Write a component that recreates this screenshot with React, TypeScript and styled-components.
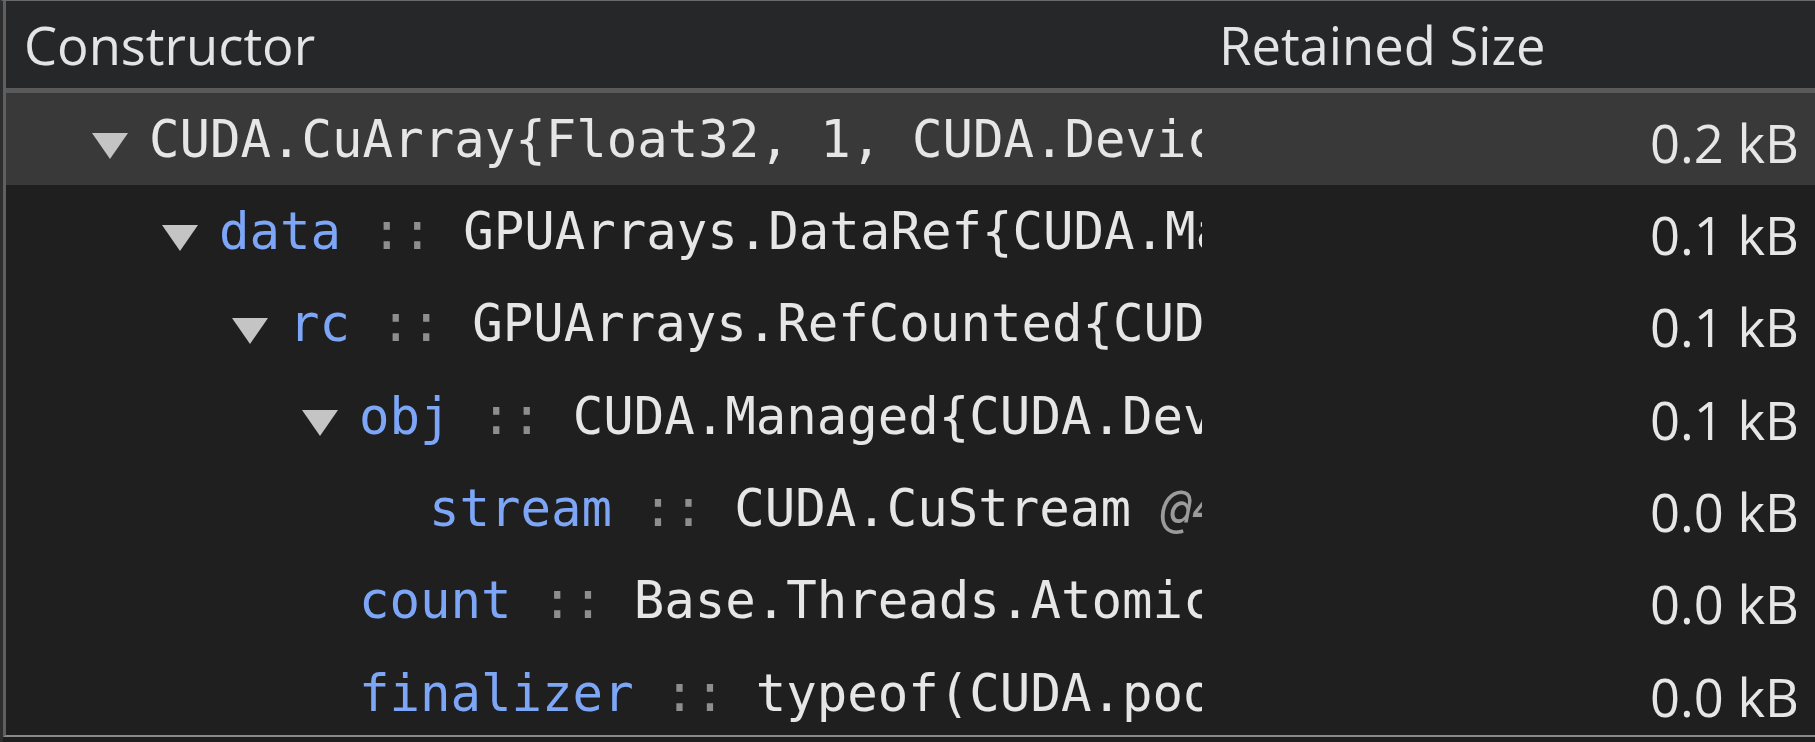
import React from "react";
import styled, { createGlobalStyle } from "styled-components";

const Global = createGlobalStyle`
  html, body { margin: 0; padding: 0; background: #1f1f1f; }
  body { width: 1815px; height: 742px; overflow: hidden; }
`;

const SANS = `"Open Sans", "Noto Sans", "Liberation Sans", sans-serif`;
const MONO = `"DejaVu Sans Mono", "Liberation Mono", monospace`;

const Frame = styled.div`
  width: 1815px;
  height: 742px;
  box-sizing: border-box;
  overflow: hidden;
  border-top: 1px solid #6a6a6a;
  border-left: 3px solid #2e2e2e;
  background: #1f1f1f;
`;

const Table = styled.div`
  height: 736px;
  box-sizing: border-box;
  border-left: 3px solid #5f5f5f;
  border-bottom: 2px solid #8a8a8a;
  overflow: hidden;
  display: flex;
  flex-direction: column;
`;

const Header = styled.div`
  display: grid;
  grid-template-columns: 1196px 1fr;
  height: 87px;
  flex: none;
  background: #262729;
  border-bottom: 5px solid #5a5a5a;
  color: #e4e4e4;
  font-family: ${SANS};
  font-size: 52.5px;
`;

const HeaderCell = styled.div<{ $pad: number }>`
  display: flex;
  align-items: center;
  padding-left: ${(p) => p.$pad}px;
  white-space: nowrap;
  overflow: hidden;
`;

const Row = styled.div<{ $selected?: boolean }>`
  display: grid;
  grid-template-columns: 1196px 1fr;
  height: 92.33px;
  flex: none;
  background: ${(p) => (p.$selected ? "#393939" : "#1f1f1f")};
`;

const NameCell = styled.div<{ $indent: number }>`
  display: flex;
  align-items: center;
  padding-left: ${(p) => p.$indent}px;
  overflow: hidden;
  white-space: nowrap;
  font-family: ${MONO};
  font-size: 50.7px;
  color: #e6e6e6;
`;

const Toggle = styled.svg`
  flex: none;
  width: 36px;
  height: 26px;
  margin-top: 14px;
  margin-right: 21px;
`;

const Spacer = styled.span`
  flex: none;
  width: 57px;
`;

const Label = styled.span`
  white-space: pre;
`;

const Key = styled.span`
  color: #7da6f6;
`;

const Sep = styled.span`
  color: #8e8e8e;
`;

const TypeText = styled.span`
  color: #e6e6e6;
`;

const Addr = styled.span`
  color: #9b9b9b;
  font-style: italic;
`;

const SizeCell = styled.div`
  display: flex;
  align-items: center;
  justify-content: flex-end;
  padding-right: 16px;
  padding-top: 6px;
  font-family: ${SANS};
  font-size: 52.5px;
  color: #e6e6e6;
  white-space: nowrap;
`;

type Node = {
  level: number;
  open?: boolean;
  key?: string;
  type: string;
  addr?: string;
  size: string;
  selected?: boolean;
};

const rows: Node[] = [
  { level: 0, open: true, type: "CUDA.CuArray{Float32, 1, CUDA.DeviceMemory}", size: "0.2 kB", selected: true },
  { level: 1, open: true, key: "data", type: "GPUArrays.DataRef{CUDA.Managed{CUDA.DeviceMemory}}", size: "0.1 kB" },
  { level: 2, open: true, key: "rc", type: "GPUArrays.RefCounted{CUDA.Managed{CUDA.DeviceMemory}}", size: "0.1 kB" },
  { level: 3, open: true, key: "obj", type: "CUDA.Managed{CUDA.DeviceMemory}", size: "0.1 kB" },
  { level: 4, key: "stream", type: "CUDA.CuStream ", addr: "@4096", size: "0.0 kB" },
  { level: 3, key: "count", type: "Base.Threads.Atomic{Int64}", size: "0.0 kB" },
  { level: 3, key: "finalizer", type: "typeof(CUDA.pool_free)", size: "0.0 kB" },
];

const Triangle = () => (
  <Toggle viewBox="0 0 36 26">
    <polygon points="0,0 36,0 18,26" fill="#c4c4c4" />
  </Toggle>
);

export default function App() {
  return (
    <>
      <Global />
      <Frame>
        <Table>
          <Header>
            <HeaderCell $pad={18}>Constructor</HeaderCell>
            <HeaderCell $pad={17}>Retained Size</HeaderCell>
          </Header>
          {rows.map((r, i) => (
            <Row key={i} $selected={r.selected}>
              <NameCell $indent={86 + r.level * 70}>
                {r.open ? <Triangle /> : <Spacer />}
                <Label>
                  {r.key && (
                    <>
                      <Key>{r.key}</Key>
                      <Sep>{" :: "}</Sep>
                    </>
                  )}
                  <TypeText>{r.type}</TypeText>
                  {r.addr && <Addr>{r.addr}</Addr>}
                </Label>
              </NameCell>
              <SizeCell>{r.size}</SizeCell>
            </Row>
          ))}
        </Table>
      </Frame>
    </>
  );
}
